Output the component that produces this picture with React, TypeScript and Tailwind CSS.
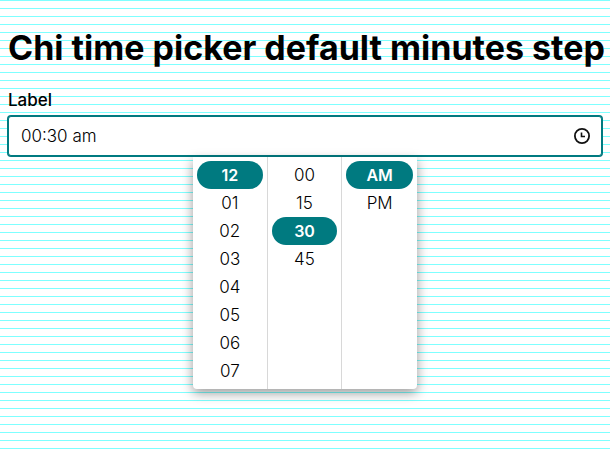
import { useState } from "react";

const hours = ["12", "01", "02", "03", "04", "05", "06", "07"];
const minutes = ["00", "15", "30", "45"];
const periods = ["AM", "PM"];

type ColumnProps = {
  name: string;
  options: string[];
  value: string;
  onSelect: (value: string) => void;
};

function Column({ name, options, value, onSelect }: ColumnProps) {
  return (
    <div
      role="group"
      aria-label={name}
      className="flex flex-col border-r border-[#d8d8d8] p-1 last:border-r-0"
    >
      {options.map((option) => (
        <button
          key={option}
          type="button"
          aria-pressed={option === value}
          onClick={() => onSelect(option)}
          className={
            option === value
              ? "h-7 rounded-full bg-[#007a80] text-center text-base leading-7 font-semibold text-white"
              : "h-7 rounded-full text-center text-[17px] leading-7 font-light text-black"
          }
        >
          {option}
        </button>
      ))}
    </div>
  );
}

function ClockIcon() {
  return (
    <svg
      viewBox="0 0 16 16"
      aria-hidden="true"
      className="pointer-events-none absolute top-3 right-3 size-4"
      fill="none"
      stroke="#111"
    >
      <circle cx="8" cy="8" r="7.1" strokeWidth="1.8" />
      <path d="M7.5 4.5V8.5H11" strokeWidth="1.6" />
    </svg>
  );
}

export default function App() {
  const [hour, setHour] = useState("12");
  const [minute, setMinute] = useState("30");
  const [period, setPeriod] = useState("AM");
  const [time, setTime] = useState("00:30 am");

  return (
    <main className="min-h-screen bg-white bg-[linear-gradient(to_bottom,#7fffff_1px,transparent_1px)] bg-[length:100%_8px] px-2 pt-7 font-['Inter',sans-serif] text-black">
      <h1 className="text-[34px] leading-10 font-bold whitespace-nowrap">
        Chi time picker default minutes step
      </h1>
      <label htmlFor="time" className="mt-5 block text-[17px] leading-6 font-medium">
        Label
      </label>
      <div className="relative mt-1">
        <input
          id="time"
          type="text"
          value={time}
          onChange={(event) => setTime(event.target.value)}
          className="block h-10 w-full rounded-[3px] border border-[#007a80] bg-white px-3 text-[17px] font-light ring-1 ring-[#007a80] outline-none"
        />
        <ClockIcon />
        <div className="absolute inset-x-0 top-full mt-px flex justify-center">
          <div className="grid h-[232px] w-56 grid-cols-3 rounded-b bg-white shadow-[0_4px_12px_rgba(0,0,0,0.4)]">
            <Column name="Hour" options={hours} value={hour} onSelect={setHour} />
            <Column name="Minutes" options={minutes} value={minute} onSelect={setMinute} />
            <Column name="Period" options={periods} value={period} onSelect={setPeriod} />
          </div>
        </div>
      </div>
    </main>
  );
}
